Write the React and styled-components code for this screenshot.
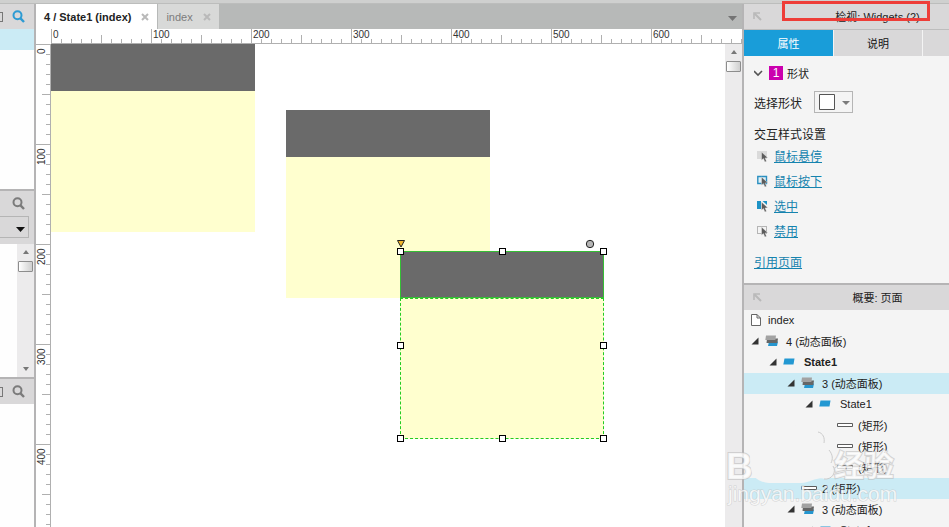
import React from 'react';
import styled, { createGlobalStyle, css } from 'styled-components';

const GlobalStyle = createGlobalStyle`
    * {
        box-sizing: border-box;
    }
    body {
        margin: 0;
        font-family: 'Liberation Sans', 'Noto Sans CJK SC', sans-serif;
        font-size: 11px;
        color: #222222;
    }
    button, select {
        font-family: inherit;
        font-size: inherit;
        color: inherit;
        border: 0;
        padding: 0;
        margin: 0;
        background: none;
    }
    ul {
        list-style: none;
        margin: 0;
        padding: 0;
    }
`

const Page = styled.div`
    position: relative;
    height: 100vh;
    overflow: hidden;
    display: flex;
    flex-direction: column;
`

const TopStrip = styled.div`
    flex: none;
    height: 4px;
    background: #cfd0cf;
    border-bottom: 1px solid #bcbdbc;
`

const Workspace = styled.div`
    flex: 1;
    min-height: 0;
    display: grid;
    grid-template-columns: 36px 1fr 207px;
`

/* left column */

const Sidebar = styled.aside`
    display: flex;
    flex-direction: column;
    overflow: hidden;
    border-right: 2px solid #b5b4b5;
    background: #fefefe;
`

const SideSection = styled.section`
    display: flex;
    flex-direction: column;
    flex: ${({ $height }) => ($height ? `0 0 ${$height}px` : '1')};
    border-top: ${({ $divided }) => ($divided ? '2px solid #b5b4b5' : '0')};
`

const SideHeader = styled.header`
    flex: none;
    height: 25px;
    display: flex;
    align-items: center;
    justify-content: space-between;
    padding-right: 9px;
    background: #d9d8d9;
`

const CutBox = styled.span`
    width: 3px;
    height: 10px;
    border: 1px solid #777777;
    border-left: 0;
    visibility: ${({ $hidden }) => ($hidden ? 'hidden' : 'visible')};
`

const IconButton = styled.button`
    display: flex;
    color: ${({ $active }) => ($active ? '#2d9bd3' : '#7b7b7b')};
`

const SelectedLine = styled.div`
    height: 21px;
    background: #cbebf5;
`

const SideFilter = styled.div`
    flex: none;
    height: 28px;
    padding-right: 5px;
    background: #d9d8d9;
`

const FilterSelect = styled.div`
    position: relative;
    height: 22px;
    border: 1px solid #b5b5b5;
    border-left: 0;
    svg {
        position: absolute;
        right: 3px;
        top: 10px;
        pointer-events: none;
    }
    select {
        appearance: none;
        display: block;
        width: 100%;
        height: 100%;
    }
`

const SideList = styled.div`
    flex: 1;
    display: flex;
    justify-content: flex-end;
`

const ScrollTrack = styled.div`
    width: 17px;
    flex: none;
    display: flex;
    flex-direction: column;
    align-items: center;
    padding: 6px 0;
    background: #ecebec;
`

const ScrollThumb = styled.div`
    width: 15px;
    height: 11px;
    margin: 7px 0 auto;
    border: 1px solid #8d8d8d;
    border-radius: 1px;
    background: linear-gradient(90deg, #ffffff, #cfcfcf);
`

/* centre column */

const Editor = styled.main`
    display: flex;
    flex-direction: column;
    min-width: 0;
    min-height: 0;
    background: #ffffff;
`

const TabBar = styled.div`
    flex: none;
    height: 25px;
    display: flex;
    gap: 1px;
    background: #b7b9b8;
`

const EditorTab = styled.div`
    display: flex;
    align-items: center;
    gap: 10px;
    padding: 0 8px;
    background: ${({ $active }) => ($active ? '#ffffff' : '#d8d9d8')};
    font-weight: ${({ $active }) => ($active ? 'bold' : 'normal')};
    color: ${({ $active }) => ($active ? '#222222' : '#7c7c7c')};
    button {
        display: flex;
        color: #b9b9b9;
    }
    > button:first-child {
        color: inherit;
        font-weight: inherit;
    }
`

const TabMenu = styled.button`
    margin: 4px 4px 0 auto;
    padding: 0 1px;
    display: flex;
    align-items: center;
    color: #747474;
`

const HorizontalRuler = styled.div`
    flex: none;
    height: 15px;
    margin-left: 15px;
    display: flex;
    overflow: hidden;
    border-bottom: 1px solid #b0b0b0;
    background-image:
        linear-gradient(90deg, #b0b0b0 1px, transparent 1px),
        linear-gradient(90deg, #b0b0b0 1px, transparent 1px),
        linear-gradient(90deg, #b0b0b0 1px, transparent 1px);
    background-size: 10px 4px, 100px 8px, 100px 14px;
    background-position: 0 bottom, 50px bottom, 0 bottom;
    background-repeat: repeat-x;
`

const EditorBody = styled.div`
    flex: 1;
    min-height: 0;
    display: flex;
`

const VerticalRuler = styled.div`
    flex: none;
    width: 15px;
    overflow: hidden;
    border-right: 1px solid #b0b0b0;
    background-image:
        linear-gradient(#b0b0b0 1px, transparent 1px),
        linear-gradient(#b0b0b0 1px, transparent 1px),
        linear-gradient(#b0b0b0 1px, transparent 1px);
    background-size: 4px 10px, 8px 100px, 14px 100px;
    background-position: right 0, right 50px, right 0;
    background-repeat: repeat-y;
`

const RulerLabel = styled.span`
    flex: none;
    font-size: 10px;
    line-height: 12px;
    color: #333333;
    ${({ $vertical }) => $vertical ? css`
        display: flex;
        justify-content: flex-end;
        height: 100px;
        padding-bottom: 4px;
        writing-mode: vertical-rl;
        transform: rotate(180deg);
    ` : css`
        width: 100px;
        padding-left: 2px;
    `}
`

const Canvas = styled.div`
    position: relative;
    flex: 1;
    overflow: hidden;
    background: #ffffff;
`

const Widget = styled.div`
    position: absolute;
    left: ${({ $x }) => $x}px;
    top: ${({ $y }) => $y}px;
    width: 204px;
    height: 188px;
`

const WidgetPart = styled.div`
    height: ${({ $head }) => ($head ? 47 : 141)}px;
    background: ${({ $head }) => ($head ? '#6a6a6a' : '#ffffcf')};
    border: 0 ${({ $head }) => ($head ? 'solid #35bf35' : 'dashed #22cc22')};
    border-width: ${({ $selected }) => ($selected ? 1 : 0)}px;
`

const Selection = styled.div`
    position: absolute;
    inset: 0 1px 1px 0;
`

const Handle = styled.span`
    position: absolute;
    left: ${({ $left }) => $left};
    top: ${({ $top }) => $top};
    width: 7px;
    height: 7px;
    margin: -3px;
    border: 1px solid #000000;
    background: #ffffff;
`

const Markers = styled.svg`
    position: absolute;
    left: -4px;
    top: -12px;
`

/* right column */

const Inspector = styled.aside`
    display: flex;
    flex-direction: column;
    min-height: 0;
    border-left: 2px solid #b5b4b5;
    background: #f4f4f4;
`

const PanelHeader = styled.header`
    flex: none;
    height: ${({ $divided }) => ($divided ? 27 : 25)}px;
    display: flex;
    align-items: center;
    padding-left: 9px;
    border-top: ${({ $divided }) => ($divided ? '2px solid #b5b4b5' : '0')};
    background: #d9d8d9;
    h2 {
        flex: 1;
        margin: 0;
        padding: 0 0 2px 44px;
        font-size: 11px;
        font-weight: normal;
        text-align: center;
    }
`

const InspectorTabs = styled.div`
    flex: none;
    height: 27px;
    display: grid;
    grid-template-columns: 89px 88px 1fr;
    gap: 1px;
    border-top: 1px solid #bdbdbd;
    background: #f4f4f4;
`

const InspectorTab = styled.button`
    background: ${({ $active }) => ($active ? '#199dd9' : '#d9d8d9')};
    color: ${({ $active }) => ($active ? '#ffffff' : '#111111')};
`

const Properties = styled.section`
    flex: none;
    padding: 7px 10px 4px;
    font-size: 12px;
`

const PropertyRow = styled.div`
    display: flex;
    align-items: center;
    height: ${({ $height }) => $height || 20}px;
    margin-bottom: ${({ $after }) => $after || 0}px;
    padding-left: ${({ $indent }) => $indent || 0}px;
    gap: ${({ $gap }) => $gap || 0}px;
`

const CountBadge = styled.span`
    width: 14px;
    height: 14px;
    line-height: 14px;
    text-align: center;
    background: #cb00ae;
    color: #ffffff;
`

const SectionTitle = styled.span`
    padding-left: 3px;
    font-size: 11px;
`

const ShapeSelect = styled.div`
    position: relative;
    width: 39px;
    height: 22px;
    border: 1px solid #b5b5b5;
    select {
        appearance: none;
        display: block;
        width: 100%;
        height: 100%;
        color: transparent;
    }
    svg {
        position: absolute;
        left: 4px;
        top: 2px;
        pointer-events: none;
    }
`

const StyleLink = styled.a`
    color: #1583ae;
    font-size: 12px;
    text-underline-offset: 1px;
`

const Tree = styled.ul`
    flex: 1;
    min-height: 0;
    overflow: hidden;
`

const TreeRow = styled.li`
    height: 21px;
    display: flex;
    align-items: center;
    padding-bottom: 2px;
    padding-left: ${({ $level }) => 7 + $level * 18}px;
    background: ${({ $selected }) => ($selected ? '#cbebf5' : 'transparent')};
    font-weight: ${({ $bold }) => ($bold ? 'bold' : 'normal')};
    white-space: nowrap;
`

const Toggle = styled.button`
    width: 8px;
    height: 8px;
    margin-right: 6px;
    display: flex;
    visibility: ${({ $leaf }) => ($leaf ? 'hidden' : 'visible')};
`

const TreeIcon = styled.span`
    display: flex;
    width: ${({ $narrow }) => ($narrow ? 12 : 16)}px;
    margin-right: 5px;
`

const RedFrame = styled.div`
    position: absolute;
    right: 19px;
    top: 1px;
    width: 148px;
    height: 20px;
    border: 3px solid #ee3d38;
`

const Watermark = styled.svg`
    position: absolute;
    right: 0;
    bottom: 0;
    pointer-events: none;
`

const SearchIcon = () => (
    <svg width='13' height='13' viewBox='0 0 13 13' fill='none' stroke='currentColor'>
        <circle cx='5.5' cy='5.3' r='4' strokeWidth='2' />
        <path d='M8.5 8.4L12 12' strokeWidth='2.4' />
    </svg>
)

const CloseIcon = () => (
    <svg width='8' height='8' viewBox='0 0 8 8' stroke='currentColor' strokeWidth='2'>
        <path d='M1 1L7 7M7 1L1 7' />
    </svg>
)

const Caret = ({ width = 9, height = 5, up, color = 'currentColor' }) => (
    <svg width={width} height={height} viewBox='0 0 10 5' preserveAspectRatio='none' fill={color}>
        <path d={up ? 'M0 5L5 0L10 5Z' : 'M0 0H10L5 5Z'} />
    </svg>
)

const CornerArrow = () => (
    <svg width='9' height='9' viewBox='0 0 9 9' fill='none' stroke='#b9b9b9'>
        <path d='M1 7V1H7' strokeWidth='1.6' />
        <path d='M1.5 1.5L8 8' strokeWidth='2' />
    </svg>
)

const STYLE_BOXES = {
    over: <path d='M0 1H10V9H0Z' fill='#dadada' />,
    down: <path d='M.8 1.5H9.5V8.5H.8Z' fill='#dff0f7' stroke='#2b8fc0' strokeWidth='1.4' />,
    selected: <path d='M0 1H4V9H0ZM5.5 1H10V5Z' fill='#1d93c6' />,
    disabled: <path d='M.5 1.5H9.5V8.5H.5Z' fill='none' stroke='#777777' strokeDasharray='1 1' />,
};

const StyleIcon = ({ kind }) => (
    <svg width='12' height='12' viewBox='0 0 12 12'>
        {STYLE_BOXES[kind]}
        <path d='M4.5 2V10.2L6.4 8.6L7.9 12L9.5 11.3L8.1 8L10.8 7.8Z' fill='#5c5c5c' stroke='#f4f4f4' strokeWidth='.4' />
    </svg>
)

const TREE_ICONS = {
    page: (
        <svg width='10' height='12' viewBox='0 0 10 12' fill='#ffffff' stroke='#666666'>
            <path d='M.5 .5H6L9.5 4V11.5H.5ZM6 .5V4H9.5' />
        </svg>
    ),
    panel: (
        <svg width='14' height='12' viewBox='0 0 14 12'>
            <path d='M4 6.5H13L12 11H3Z' fill='#2596cf' />
            <path d='M2 3.5H13L12.3 8H1.5Z' fill='#666666' />
            <path d='M1 .5H11L10.4 5H.3Z' fill='#a2a2a2' />
        </svg>
    ),
    state: (
        <svg width='12' height='7' viewBox='0 0 12 7'>
            <path d='M1.5 .5H11.5L10.5 6.5H.3Z' fill='#2398d2' />
        </svg>
    ),
    rect: (
        <svg width='16' height='4' viewBox='0 0 16 4'>
            <path d='M.5 .5H15.5V3.5H.5Z' fill='#ffffff' stroke='#5c5c5c' />
        </svg>
    ),
};

const links = [
    { kind: 'over', text: '鼠标悬停' },
    { kind: 'down', text: '鼠标按下' },
    { kind: 'selected', text: '选中' },
    { kind: 'disabled', text: '禁用' },
];

const nodes = [
    { level: 0, icon: 'panel', text: '4 (动态面板)' },
    { level: 1, icon: 'state', text: 'State1', bold: true },
    { level: 2, icon: 'panel', text: '3 (动态面板)', selected: true },
    { level: 3, icon: 'state', text: 'State1' },
    { level: 4, icon: 'rect', text: '(矩形)' },
    { level: 4, icon: 'rect', text: '(矩形)' },
    { level: 4, icon: 'rect', text: '(矩形)' },
    { level: 2, icon: 'rect', text: '2 (矩形)', selected: true },
    { level: 2, icon: 'panel', text: '3 (动态面板)' },
    { level: 3, icon: 'state', text: 'State1' },
];

const handles = [
    ['0%', '0%'], ['50%', '0%'], ['100%', '0%'],
    ['0%', '50%'], ['100%', '50%'],
    ['0%', '100%'], ['50%', '100%'], ['100%', '100%'],
];

const LeftColumn = () => (
    <Sidebar>
        <SideSection $height={185}>
            <SideHeader>
                <CutBox />
                <IconButton $active aria-label='Search pages'><SearchIcon /></IconButton>
            </SideHeader>
            <SelectedLine />
        </SideSection>
        <SideSection $height={188} $divided>
            <SideHeader>
                <CutBox $hidden />
                <IconButton aria-label='Search widgets'><SearchIcon /></IconButton>
            </SideHeader>
            <SideFilter>
                <FilterSelect>
                    <select aria-label='Library' />
                    <Caret color='#111111' />
                </FilterSelect>
            </SideFilter>
            <SideList>
                <ScrollTrack>
                    <Caret up width={6} height={4} color='#777777' />
                    <ScrollThumb />
                    <Caret width={6} height={4} color='#777777' />
                </ScrollTrack>
            </SideList>
        </SideSection>
        <SideSection $divided>
            <SideHeader>
                <CutBox />
                <IconButton aria-label='Search masters'><SearchIcon /></IconButton>
            </SideHeader>
        </SideSection>
    </Sidebar>
)

const EditorColumn = () => (
    <Editor>
        <TabBar>
            <EditorTab $active>
                <button>4 / State1 (index)</button>
                <button aria-label='Close State1'><CloseIcon /></button>
            </EditorTab>
            <EditorTab>
                <button>index</button>
                <button aria-label='Close index'><CloseIcon /></button>
            </EditorTab>
            <TabMenu aria-label='Open tabs'><Caret /></TabMenu>
        </TabBar>
        <HorizontalRuler>
            {[0, 100, 200, 300, 400, 500, 600].map((n) => <RulerLabel key={n}>{n}</RulerLabel>)}
        </HorizontalRuler>
        <EditorBody>
            <VerticalRuler>
                {[0, 100, 200, 300, 400].map((n) => <RulerLabel key={n} $vertical>{n}</RulerLabel>)}
            </VerticalRuler>
            <Canvas>
                <Widget $x={0} $y={0}>
                    <WidgetPart $head />
                    <WidgetPart />
                </Widget>
                <Widget $x={235} $y={66}>
                    <WidgetPart $head />
                    <WidgetPart />
                </Widget>
                <Widget $x={349} $y={207}>
                    <WidgetPart $head $selected />
                    <WidgetPart $selected />
                    <Selection>
                        {handles.map(([left, top]) => <Handle key={left + top} $left={left} $top={top} />)}
                        <Markers width='200' height='10' viewBox='0 0 200 10' stroke='#222222'>
                            <path d='M1.5 1.5H8.5L5 8Z' fill='#f3b62c' />
                            <circle cx='194' cy='5' r='3.7' fill='#b5b5b5' />
                        </Markers>
                    </Selection>
                </Widget>
            </Canvas>
            <ScrollTrack>
                <Caret up width={6} height={4} color='#777777' />
                <ScrollThumb />
            </ScrollTrack>
        </EditorBody>
    </Editor>
)

const InspectorColumn = () => (
    <Inspector>
        <PanelHeader>
            <CornerArrow />
            <h2>检视: Widgets (2)</h2>
        </PanelHeader>
        <InspectorTabs>
            <InspectorTab $active>属性</InspectorTab>
            <InspectorTab>说明</InspectorTab>
            <InspectorTab aria-label='More' />
        </InspectorTabs>
        <Properties>
            <PropertyRow $after={8} $gap={1}>
                <svg width='14' height='8' viewBox='0 0 14 8' fill='none' stroke='#555555' strokeWidth='1.6'>
                    <path d='M0 2L4 6L8 2' />
                </svg>
                <CountBadge>1</CountBadge>
                <SectionTitle>形状</SectionTitle>
            </PropertyRow>
            <PropertyRow $height={22} $after={10} $gap={12}>
                <label htmlFor='shape'>选择形状</label>
                <ShapeSelect>
                    <select id='shape' />
                    <svg width='32' height='16' viewBox='0 0 32 16'>
                        <path d='M.5 .5H15.5V15.5H.5Z' fill='#ffffff' stroke='#555555' />
                        <path d='M23 7H31L27 11Z' fill='#7b7b7b' />
                    </svg>
                </ShapeSelect>
            </PropertyRow>
            <PropertyRow>交互样式设置</PropertyRow>
            {links.map(({ kind, text }) => (
                <PropertyRow key={kind} $height={25} $indent={3} $gap={5}>
                    <StyleIcon kind={kind} />
                    <StyleLink href='#'>{text}</StyleLink>
                </PropertyRow>
            ))}
            <PropertyRow $height={36}>
                <StyleLink href='#'>引用页面</StyleLink>
            </PropertyRow>
        </Properties>
        <PanelHeader $divided>
            <CornerArrow />
            <h2>概要: 页面</h2>
        </PanelHeader>
        <Tree>
            <TreeRow $level={0}>
                <TreeIcon $narrow>{TREE_ICONS.page}</TreeIcon>
                index
            </TreeRow>
            {nodes.map(({ level, icon, text, bold, selected }, i) => (
                <TreeRow key={i} $level={level} $bold={bold} $selected={selected}>
                    <Toggle $leaf={icon === 'rect'} aria-label={`Toggle ${text}`}>
                        <svg width='8' height='8' viewBox='0 0 8 8'>
                            <path d='M7.5 .5V7.5H.5Z' fill='#333333' />
                        </svg>
                    </Toggle>
                    <TreeIcon>{TREE_ICONS[icon]}</TreeIcon>
                    {text}
                </TreeRow>
            ))}
        </Tree>
    </Inspector>
)

const App = () => {
    return (
        <>
            <GlobalStyle />
            <Page>
                <TopStrip />
                <Workspace>
                    <LeftColumn />
                    <EditorColumn />
                    <InspectorColumn />
                </Workspace>
                <RedFrame />
                <Watermark width='225' height='104' viewBox='0 0 225 104'>
                    <g fill='#ffffff' fillOpacity='.75' stroke='#bdbdbd' strokeOpacity='.6' paintOrder='stroke' strokeWidth='2'>
                        <text x='2' y='56' fontSize='37' fontWeight='bold'>B</text>
                        <text x='110' y='53' fontSize='30' fontWeight='bold'>经验</text>
                        <text x='4' y='78' fontSize='21' strokeWidth='1'>jingyan.baidu.com</text>
                    </g>
                    <path d='M95 4C101 5 104 12 103 20C109 25 111 33 108 38C113 44 109 57 101 56C94 53 88 59 77 60H45C34 59 27 53 27 44C24 31 28 14 45 8C63 1 83 0 95 4Z' fill='#f4f4f4' />
                    <path d='M94 9C99 10 101 15 100 20M105 27C109 32 109 36 107 40M109 43C113 49 108 57 100 56' fill='none' stroke='#cccccc' />
                </Watermark>
            </Page>
        </>
    )
}

export default App
